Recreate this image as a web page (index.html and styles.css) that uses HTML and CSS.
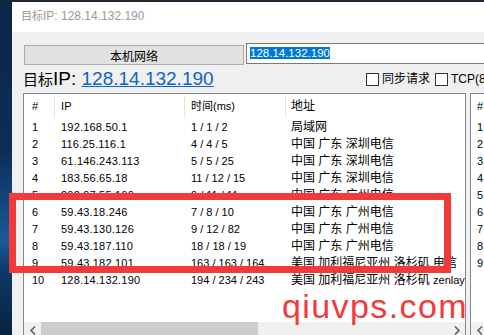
FILE: index.html
```html
<!DOCTYPE html>
<html lang="zh-CN">
<head>
    <meta charset="UTF-8" />
    <title>目标IP: 128.14.132.190</title>
    <link rel="stylesheet" href="styles.css">
</head>
<body>
    <div class="window">
        <div class="titlebar"><span class="cjk-sm">目标</span>IP: 128.14.132.190</div>
        <div class="content">
            <div class="toolbar">
                <button class="btn">本机网络</button>
                <div class="ip-box"><span class="sel">128.14.132.190</span></div>
            </div>
            <div class="target-row">
                <div class="target"><span class="cjk-big">目标</span>IP: <a class="ip-link">128.14.132.190</a></div>
                <label class="opt"><span class="chk"></span>同步请求</label>
                <label class="opt"><span class="chk"></span>TCP(80)</label>
            </div>
            <div class="lists">
                <div class="list main">
                    <div class="row head">
                        <div class="c1"><span>#</span></div>
                        <div class="c2"><span>IP</span></div>
                        <div class="c3"><span>时间(ms)</span></div>
                        <div class="c4 addr"><span>地址</span></div>
                    </div>
                    <div class="row"><div class="c1">1</div><div class="c2">192.168.50.1</div><div class="c3">1 / 1 / 2</div><div class="c4 addr">局域网</div></div>
                    <div class="row"><div class="c1">2</div><div class="c2">116.25.116.1</div><div class="c3">4 / 4 / 5</div><div class="c4 addr">中国 广东 深圳电信</div></div>
                    <div class="row"><div class="c1">3</div><div class="c2">61.146.243.113</div><div class="c3">5 / 5 / 25</div><div class="c4 addr">中国 广东 深圳电信</div></div>
                    <div class="row"><div class="c1">4</div><div class="c2">183.56.65.18</div><div class="c3">11 / 12 / 15</div><div class="c4 addr">中国 广东 深圳电信</div></div>
                    <div class="row"><div class="c1">5</div><div class="c2">202.97.55.160</div><div class="c3">9 / 11 / 11</div><div class="c4 addr">中国 广东 广州电信</div></div>
                    <div class="row"><div class="c1">6</div><div class="c2">59.43.18.246</div><div class="c3">7 / 8 / 10</div><div class="c4 addr">中国 广东 广州电信</div></div>
                    <div class="row"><div class="c1">7</div><div class="c2">59.43.130.126</div><div class="c3">9 / 12 / 82</div><div class="c4 addr">中国 广东 广州电信</div></div>
                    <div class="row"><div class="c1">8</div><div class="c2">59.43.187.110</div><div class="c3">18 / 18 / 19</div><div class="c4 addr">中国 广东 广州电信</div></div>
                    <div class="row"><div class="c1">9</div><div class="c2">59.43.182.101</div><div class="c3">163 / 163 / 164</div><div class="c4 addr">美国 加利福尼亚州 洛杉矶 电信</div></div>
                    <div class="row"><div class="c1">10</div><div class="c2">128.14.132.190</div><div class="c3">194 / 234 / 243</div><div class="c4 addr">美国 加利福尼亚州 洛杉矶 <span class="lat">zenlayer</span></div></div>
                    <div class="hscroll">
                        <div class="arrow"><svg width="8" height="9" viewBox="0 0 8 9"><polyline points="6,0.5 2,4.5 6,8.5" fill="none" stroke="#606060" stroke-width="1.6"/></svg></div>
                        <div class="thumb"></div>
                        <div class="track"></div>
                        <div class="arrow"><svg width="8" height="9" viewBox="0 0 8 9"><polyline points="2,0.5 6,4.5 2,8.5" fill="none" stroke="#606060" stroke-width="1.6"/></svg></div>
                    </div>
                </div>
                <div class="list side">
                    <div class="row head"><div class="c1"><span>#</span></div></div>
                    <div class="row"><div class="c1">1</div></div>
                    <div class="row"><div class="c1">2</div></div>
                    <div class="row"><div class="c1">3</div></div>
                    <div class="row"><div class="c1">4</div></div>
                    <div class="row"><div class="c1">5</div></div>
                    <div class="row"><div class="c1">6</div></div>
                    <div class="row"><div class="c1">7</div></div>
                    <div class="row"><div class="c1">8</div></div>
                    <div class="row"><div class="c1">9</div></div>
                    <div class="hscroll">
                        <div class="arrow"><svg width="8" height="9" viewBox="0 0 8 9"><polyline points="6,0.5 2,4.5 6,8.5" fill="none" stroke="#606060" stroke-width="1.6"/></svg></div>
                        <div class="track"></div>
                    </div>
                </div>
            </div>
        </div>
    </div>

    <!-- annotation drawn over the screenshot -->
    <div class="mark"></div>
    <div class="watermark">qiuvps.com</div>
</body>
</html>
```

FILE: styles.css
```css
body {
    margin: 0;
    width: 484px;
    height: 335px;
    overflow: hidden;
    position: relative;
    font-family: "Liberation Sans", "Noto Sans CJK SC", sans-serif;
    background: linear-gradient(180deg, #1d2733 0, #1d2733 2px, #0b2748 2px, #0c2d57 45%, #1a5a98 72%, #0f3a6c 80%, #08223f 100%);
    padding: 2px 0 0 12px;
    box-sizing: border-box;
}

.window {
    width: 600px;
    height: 340px;
    background-color: #f0f0f0;
}

.titlebar {
    height: 30px;
    background-color: #fff;
    color: #9a9a9a;
    font-size: 12px;
    line-height: 28px;
    padding-left: 9px;
}

.cjk-sm {
    font-size: 11px;
}

.content {
    padding: 11px 0 0 11px;
}

/* top controls */
.toolbar {
    display: flex;
    height: 21px;
}

.btn {
    width: 220px;
    height: 20px;
    margin: 2px 0 0 1px;
    padding: 0;
    border: 1px solid #adadad;
    background-color: #e1e1e1;
    font-family: "Noto Sans CJK SC", sans-serif;
    font-size: 12px;
    line-height: 17px;
    color: #000;
}

.ip-box {
    width: 300px;
    height: 21px;
    margin-left: 2px;
    box-sizing: border-box;
    border: 1px solid #7a7a7a;
    background-color: #fff;
    padding-left: 3px;
    font-size: 11.5px;
    line-height: 19px;
}

.sel {
    background-color: #0078d7;
    color: #fff;
}

.target-row {
    display: flex;
    align-items: center;
    height: 22px;
    margin-top: 4px;
}

.target {
    width: 343px;
    font-size: 19px;
    line-height: 22px;
    color: #000;
}

.cjk-big {
    font-size: 15px;
}

.ip-link {
    color: #0b66c8;
    text-decoration: underline;
}

.opt {
    display: flex;
    align-items: center;
    font-size: 12px;
    line-height: 16px;
    margin-right: 5px;
    white-space: nowrap;
}

.chk {
    width: 13px;
    height: 13px;
    box-sizing: border-box;
    border: 1px solid #333;
    background-color: #fff;
    margin-right: 3px;
}

/* result lists */
.lists {
    display: flex;
    gap: 4px;
    margin-top: 3px;
}

.list {
    height: 247px;
    box-sizing: border-box;
    border: 1px solid #828790;
    background-color: #fff;
    position: relative;
    overflow: hidden;
    font-size: 11px;
    color: #000;
}

.list.main {
    width: 443px;
}

.list.side {
    width: 120px;
}

.row {
    display: grid;
    grid-template-columns: 31px 130px 101px 1fr;
    height: 17px;
    line-height: 17px;
    white-space: nowrap;
}

.row div {
    padding-left: 6px;
    overflow: visible;
}

.row .c1 {
    padding-left: 8px;
}

.row .c4 {
    padding-left: 5px;
}

.c2 {
    letter-spacing: 0.2px;
}

.addr {
    font-size: 12px;
}

.lat {
    font-size: 11px;
}

.row.head {
    height: 25px;
    line-height: 23px;
}

.row.head div {
    margin: 1px 0;
}

.row.head .c1,
.row.head .c2,
.row.head .c3 {
    border-right: 1px solid #e5e5e5;
}

.list.side .row.head .c1 {
    border-right: none;
}

.list.side .row .c1 {
    padding-left: 6px;
}

.hscroll {
    position: absolute;
    left: 0;
    right: 0;
    bottom: 0;
    height: 17px;
    display: flex;
    background-color: #f0f0f0;
}

.hscroll .arrow {
    width: 17px;
    display: flex;
    align-items: center;
    justify-content: center;
}

.hscroll .thumb {
    width: 217px;
    background-color: #cdcdcd;
}

.hscroll .track {
    flex: 1;
}

/* red box and site watermark on top of the shot */
.mark {
    position: absolute;
    left: 9px;
    top: 193px;
    width: 442px;
    height: 80px;
    box-sizing: border-box;
    border: 7px solid #f23a3a;
}

.watermark {
    position: absolute;
    left: 282px;
    top: 288px;
    font-family: "Liberation Sans", sans-serif;
    font-size: 34px;
    line-height: 36px;
    letter-spacing: 1.4px;
    color: #f23a3a;
}
```
